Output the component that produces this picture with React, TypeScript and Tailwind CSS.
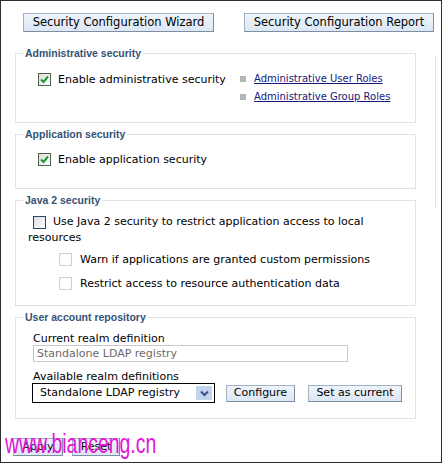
import type { ReactNode } from 'react'

function CheckBox({ variant }: { variant: 'checked' | 'empty' | 'disabled' }) {
  if (variant === 'checked') {
    return (
      <span className="inline-flex w-[13px] h-[13px] shrink-0 border border-[#4c604e] bg-gradient-to-br from-[#dcdcdc] to-[#ffffff] items-center justify-center">
        <svg width="9" height="9" viewBox="0 0 9 9">
          <path d="M1 4.5 L3.5 7 L8 1.5" fill="none" stroke="#1f9a2a" strokeWidth="2" />
        </svg>
      </span>
    )
  }
  if (variant === 'empty') {
    return (
      <span className="inline-block w-[13px] h-[13px] shrink-0 border border-[#2c4660] bg-gradient-to-br from-[#d8dde4] to-[#ffffff] align-[-2px]" />
    )
  }
  return <span className="inline-block w-[13px] h-[13px] shrink-0 border border-[#cfcfcf] bg-white" />
}

function Btn({ children, className = '' }: { children: ReactNode; className?: string }) {
  return (
    <button
      className={`flex items-center justify-center border border-[#a3b1c2] border-r-[#7d8da2] border-b-[#7d8da2] bg-gradient-to-b from-[#eef4fb] to-[#dce7f4] text-black ${className}`}
    >
      {children}
    </button>
  )
}

function Section({ title, children, className = '' }: { title: string; children: ReactNode; className?: string }) {
  return (
    <fieldset className={`border border-[#e2e2e2] w-[401px] ${className}`}>
      <legend className="ml-[7px] px-[2px] font-['Liberation_Sans',sans-serif] font-bold text-[10.5px] leading-[13px] text-[#355273]">
        {title}
      </legend>
      {children}
    </fieldset>
  )
}

export default function App() {
  return (
    <div className="relative w-[442px] h-[463px] overflow-hidden border border-[#2e2e2e] bg-white font-['DejaVu_Sans',sans-serif] text-[11px] text-black">
      <div className="flex pl-[22px] pt-[12px] gap-[30px]">
        <Btn className="w-[191px] h-[19px] text-[11.5px]">Security Configuration Wizard</Btn>
        <Btn className="w-[190px] h-[19px] text-[11.5px]">Security Configuration Report</Btn>
      </div>

      <div className="flex pl-[14px] mt-[15px]">
        <div className="flex flex-col gap-[5px]">
          <Section title="Administrative security">
            <div className="flex pt-[10px] pb-[16px]">
              <div className="flex items-center h-[18px] pl-[22px] gap-[7px] w-[224px]">
                <CheckBox variant="checked" />
                <span className="leading-[18px] pt-[1px]">Enable administrative security</span>
              </div>
              <div className="flex flex-col text-[10px]">
                {['Administrative User Roles', 'Administrative Group Roles'].map((l) => (
                  <div key={l} className="flex items-center h-[18px] gap-[8px]">
                    <span className="w-[6px] h-[6px] bg-[#b5b5b5]" />
                    <a className="underline text-[#17177d] leading-[18px]">{l}</a>
                  </div>
                ))}
              </div>
            </div>
          </Section>

          <Section title="Application security">
            <div className="flex items-center h-[18px] mt-[9px] mb-[20px] pl-[22px] gap-[7px]">
              <CheckBox variant="checked" />
              <span className="leading-[18px] pt-[2px]">Enable application security</span>
            </div>
          </Section>

          <Section title="Java 2 security">
            <div className="pl-[12px] pt-[8px] pb-[13px] pr-[4px]">
              <p className="leading-[14px]">
                <span className="inline-block ml-[5px] mr-[7px] align-[-2px]">
                  <CheckBox variant="empty" />
                </span>
                Use Java 2 security to restrict application access to local resources
              </p>
              <div className="flex flex-col gap-[6px] mt-[5px] pl-[31px]">
                <div className="flex items-center h-[18px] gap-[8px]">
                  <CheckBox variant="disabled" />
                  <span className="leading-[18px] pt-[2px]">Warn if applications are granted custom permissions</span>
                </div>
                <div className="flex items-center h-[18px] gap-[8px]">
                  <CheckBox variant="disabled" />
                  <span className="leading-[18px] pt-[2px]">Restrict access to resource authentication data</span>
                </div>
              </div>
            </div>
          </Section>

          <Section title="User account repository">
            <div className="pl-[17px] pt-[8px] pb-[15px]">
              <div className="leading-[13px]">Current realm definition</div>
              <div className="w-[315px] h-[17px] border border-[#c9c9c9] pl-[3px] leading-[15px] text-[#6a6a6a]">
                Standalone LDAP registry
              </div>
              <div className="leading-[12px] mt-[9px]">Available realm definitions</div>
              <div className="flex items-center -ml-[1px]">
                <div className="flex items-center justify-between w-[183px] h-[20px] border border-black pl-[7px] pr-[2px]">
                  <span>Standalone LDAP registry</span>
                  <span className="flex items-center justify-center w-[16px] h-[14px] bg-[#c3d3ec]">
                    <svg width="9" height="7" viewBox="0 0 9 7">
                      <path d="M1 1.5 L4.5 5 L8 1.5" fill="none" stroke="#3a5680" strokeWidth="2" />
                    </svg>
                  </span>
                </div>
                <Btn className="ml-[11px] w-[69px] h-[17px]">Configure</Btn>
                <Btn className="ml-[13px] w-[94px] h-[17px]">Set as current</Btn>
              </div>
            </div>
          </Section>
        </div>

        <div className="ml-[19px] mt-[8px] h-[152px] border-l border-[#e4e4e4]" />
      </div>

      <div className="flex pl-[12px] mt-[19px] gap-[9px]">
        <Btn className="w-[50px] h-[18px]">Apply</Btn>
        <Btn className="w-[48px] h-[18px]">Reset</Btn>
      </div>

      <div className="absolute left-[4px] top-[430px] origin-left scale-x-[0.72] font-['Liberation_Sans',sans-serif] text-[27px] leading-[27px] text-[#e415d9] whitespace-nowrap">
        www.bianceng.cn
      </div>
    </div>
  )
}
